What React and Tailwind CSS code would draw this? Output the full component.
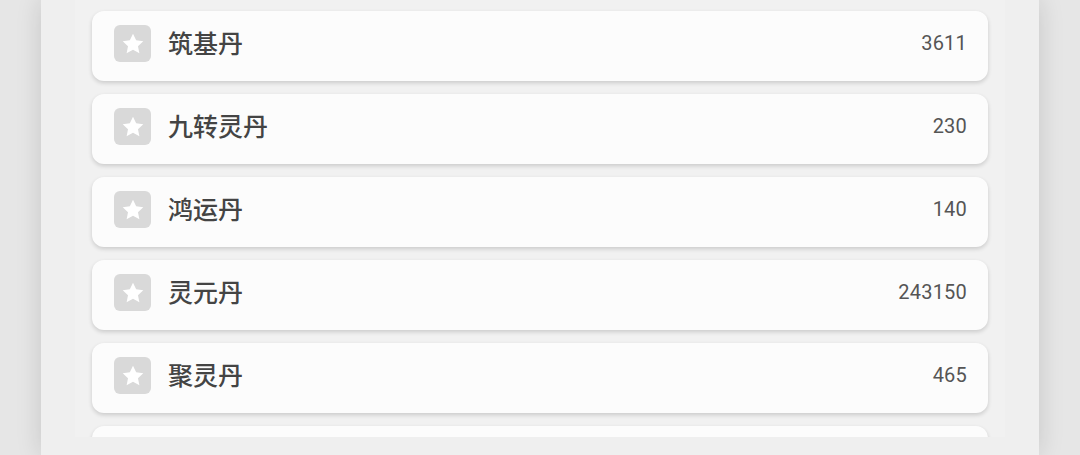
import React from "react";

const items = [
  { name: "筑基丹", count: "3611" },
  { name: "九转灵丹", count: "230" },
  { name: "鸿运丹", count: "140" },
  { name: "灵元丹", count: "243150" },
  { name: "聚灵丹", count: "465" },
];

function Star() {
  return (
    <svg width="26" height="26" viewBox="0 0 24 24">
      <path
        fill="#ffffff"
        d="M12 2.5l2.9 6.1 6.6.8-4.9 4.6 1.3 6.6L12 17.3l-5.9 3.3 1.3-6.6-4.9-4.6 6.6-.8z"
      />
    </svg>
  );
}

export default function App() {
  return (
    <div className="w-[1080px] h-[455px] overflow-hidden bg-[#e6e6e6] flex">
      <div className="ml-[41px] w-[998px] h-[455px] bg-[#efefef] shadow-[0_0_24px_rgba(0,0,0,0.14)] px-[34px] pb-[18px] flex flex-col">
        <div className="flex-1 overflow-hidden bg-[#f1f1f1] px-[17px] pt-[11px] flex flex-col gap-[13px]">
          {items.map((it) => (
            <div
              key={it.name}
              className="shrink-0 h-[70px] rounded-[12px] bg-[#fcfcfc] shadow-[0_2px_4px_rgba(0,0,0,0.16)] flex items-center pl-[22px] pr-[21px] pb-[5px]"
            >
              <div className="w-[37px] h-[37px] rounded-[6px] bg-[#d9d9d9] flex items-center justify-center">
                <Star />
              </div>
              <div
                className="ml-[17px] text-[25px] font-medium text-[#444444] leading-none pb-[3px]"
                style={{ fontFamily: '"Noto Sans CJK SC", sans-serif' }}
              >
                {it.name}
              </div>
              <div
                className="ml-auto text-[20px] text-[#555555] leading-none pb-[1px] tracking-[0.2px]"
                style={{ fontFamily: 'Roboto, sans-serif' }}
              >
                {it.count}
              </div>
            </div>
          ))}
          <div className="shrink-0 h-[70px] rounded-[12px] bg-[#fcfcfc] shadow-[0_2px_4px_rgba(0,0,0,0.16)]" />
        </div>
      </div>
    </div>
  );
}
